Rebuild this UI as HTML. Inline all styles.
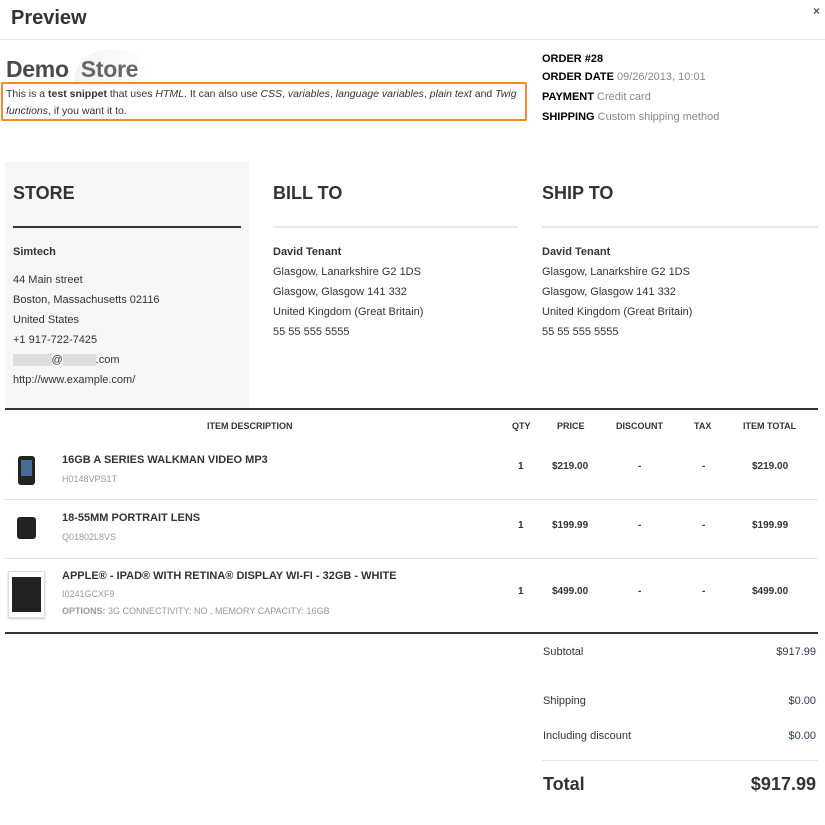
<!DOCTYPE html><html><head><style>
*{margin:0;padding:0;box-sizing:border-box}
body{width:825px;height:825px;background:#fff;font-family:"Liberation Sans",sans-serif;color:#333;position:relative;overflow:hidden}
.a{position:absolute;white-space:nowrap}
.s{font-size:11px;line-height:14px}
.g{color:#888}
.b{font-weight:bold}
.h{font-size:18px;font-weight:bold;color:#333}
.th{font-size:9px;font-weight:bold;line-height:12px}
.n{font-size:11px;font-weight:bold}
.sku{font-size:9px;color:#999}
.v{color:#2e3a50}
</style></head><body>
<div class="a" style="left:11px;top:7px;font-size:20px;font-weight:bold;color:#333">Preview</div>
<div class="a" style="left:813px;top:4px;font-size:12px;color:#555;font-weight:bold">×</div>
<div class="a" style="left:0;top:39px;width:825px;height:1px;background:#e8e8e8"></div>

<div class="a" style="left:74px;top:50px;width:80px;height:32px;border-radius:40px 40px 0 0;background:linear-gradient(90deg,#f3f3f3,#fff)"></div>
<div class="a" style="left:6px;top:56px;font-size:23px;font-weight:bold;color:#4a4a4a;letter-spacing:-0.3px">Demo <span style="color:#666;margin-left:6px">Store</span></div>
<div class="a" style="left:1px;top:82px;width:526px;height:39px;border:2px solid #f08a2c;border-radius:2px"></div>
<div class="a s" style="left:6px;top:86px;font-size:10.5px;line-height:17px;white-space:normal;width:518px">This is a <b>test snippet</b> that uses <i>HTML</i>. It can also use <i>CSS</i>, <i>variables</i>, <i>language variables</i>, <i>plain text</i> and <i>Twig functions</i>, if you want it to.</div>

<div class="a s" style="left:542px;top:52px;color:#000"><b>ORDER #28</b></div>
<div class="a s" style="left:542px;top:70px;color:#000"><b>ORDER DATE</b> <span class="g">09/26/2013, 10:01</span></div>
<div class="a s" style="left:542px;top:90px;color:#000"><b>PAYMENT</b> <span class="g">Credit card</span></div>
<div class="a s" style="left:542px;top:110px;color:#000"><b>SHIPPING</b> <span class="g">Custom shipping method</span></div>

<div class="a" style="left:5px;top:162px;width:244px;height:246px;background:#f6f6f6"></div>
<div class="a h" style="left:13px;top:183px">STORE</div>
<div class="a" style="left:13px;top:226px;width:228px;height:2px;background:#333"></div>
<div class="a h" style="left:273px;top:183px">BILL TO</div>
<div class="a" style="left:273px;top:226px;width:245px;height:2px;background:#e8e8e8"></div>
<div class="a h" style="left:542px;top:183px">SHIP TO</div>
<div class="a" style="left:542px;top:226px;width:276px;height:2px;background:#e8e8e8"></div>

<div class="a s" style="left:13px;top:242px;line-height:20px"><b>Simtech</b></div>
<div class="a s" style="left:13px;top:270px;line-height:20px">44 Main street<br>Boston, Massachusetts 02116<br>United States<br>+1 917-722-7425<br><span style="background:#ddd;color:#ddd">xxxxxxx</span>@<span style="background:#ddd;color:#ddd">xxxxxx</span>.com<br>http://www.example.com/</div>
<div class="a s" style="left:273px;top:242px;line-height:20px"><b>David Tenant</b><br>Glasgow, Lanarkshire G2 1DS<br>Glasgow, Glasgow 141 332<br>United Kingdom (Great Britain)<br>55 55 555 5555</div>
<div class="a s" style="left:542px;top:242px;line-height:20px"><b>David Tenant</b><br>Glasgow, Lanarkshire G2 1DS<br>Glasgow, Glasgow 141 332<br>United Kingdom (Great Britain)<br>55 55 555 5555</div>

<div class="a" style="left:5px;top:408px;width:813px;height:2px;background:#333"></div>
<div class="a th" style="left:207px;top:420px">ITEM DESCRIPTION</div>
<div class="a th" style="left:512px;top:420px">QTY</div>
<div class="a th" style="left:557px;top:420px">PRICE</div>
<div class="a th" style="left:616px;top:420px">DISCOUNT</div>
<div class="a th" style="left:694px;top:420px">TAX</div>
<div class="a th" style="left:743px;top:420px">ITEM TOTAL</div>

<div class="a" style="left:18px;top:456px;width:17px;height:29px;background:#222;border-radius:3px"><div style="margin:4px 3px;height:16px;background:#4a6a9a"></div></div>
<div class="a n" style="left:62px;top:454px">16GB A SERIES WALKMAN VIDEO MP3</div>
<div class="a sku" style="left:62px;top:474px">H0148VPS1T</div>
<div class="a n" style="left:518px;top:461px;font-size:10px">1</div>
<div class="a n" style="left:552px;top:461px;font-size:10px">$219.00</div>
<div class="a n" style="left:638px;top:461px;font-size:10px">-</div>
<div class="a n" style="left:702px;top:461px;font-size:10px">-</div>
<div class="a n" style="left:752px;top:461px;font-size:10px">$219.00</div>
<div class="a" style="left:5px;top:499px;width:813px;height:1px;background:#e5e5e5"></div>

<div class="a" style="left:17px;top:517px;width:19px;height:22px;background:#222;border-radius:3px"></div>
<div class="a n" style="left:62px;top:512px">18-55MM PORTRAIT LENS</div>
<div class="a sku" style="left:62px;top:532px">Q01802L8VS</div>
<div class="a n" style="left:518px;top:520px;font-size:10px">1</div>
<div class="a n" style="left:552px;top:520px;font-size:10px">$199.99</div>
<div class="a n" style="left:638px;top:520px;font-size:10px">-</div>
<div class="a n" style="left:702px;top:520px;font-size:10px">-</div>
<div class="a n" style="left:752px;top:520px;font-size:10px">$199.99</div>
<div class="a" style="left:5px;top:558px;width:813px;height:1px;background:#e5e5e5"></div>

<div class="a" style="left:8px;top:571px;width:37px;height:47px;background:#fff;border:1px solid #ddd;box-shadow:0 1px 2px #ccc"><div style="margin:5px 3px;height:35px;background:#222"></div></div>
<div class="a n" style="left:62px;top:570px">APPLE® - IPAD® WITH RETINA® DISPLAY WI-FI - 32GB - WHITE</div>
<div class="a sku" style="left:62px;top:589px">I0241GCXF9</div>
<div class="a sku" style="left:62px;top:606px"><b>OPTIONS:</b> 3G CONNECTIVITY: NO , MEMORY CAPACITY: 16GB</div>
<div class="a n" style="left:518px;top:586px;font-size:10px">1</div>
<div class="a n" style="left:552px;top:586px;font-size:10px">$499.00</div>
<div class="a n" style="left:638px;top:586px;font-size:10px">-</div>
<div class="a n" style="left:702px;top:586px;font-size:10px">-</div>
<div class="a n" style="left:752px;top:586px;font-size:10px">$499.00</div>
<div class="a" style="left:5px;top:632px;width:813px;height:2px;background:#333"></div>

<div class="a s" style="left:543px;top:645px">Subtotal</div>
<div class="a s v" style="right:9px;top:645px">$917.99</div>
<div class="a s" style="left:543px;top:694px">Shipping</div>
<div class="a s v" style="right:9px;top:694px">$0.00</div>
<div class="a s" style="left:543px;top:729px">Including discount</div>
<div class="a s v" style="right:9px;top:729px">$0.00</div>
<div class="a" style="left:542px;top:760px;width:276px;height:1px;background:#e5e5e5"></div>
<div class="a" style="left:543px;top:774px;font-size:18px;font-weight:bold">Total</div>
<div class="a" style="right:9px;top:774px;font-size:18px;font-weight:bold">$917.99</div>
</body></html>
